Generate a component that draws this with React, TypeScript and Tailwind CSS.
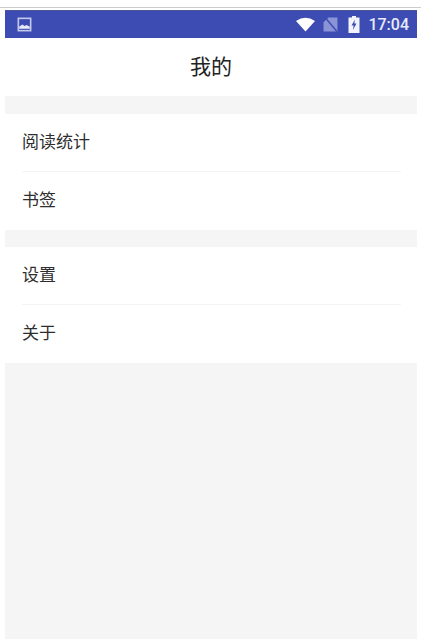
const font = { fontFamily: '"Noto Sans CJK SC", sans-serif' };

function Row({ label, divider }: { label: string; divider?: boolean }) {
  return (
    <div className="h-[58px] pl-[17px] pr-[16px] flex flex-col">
      <div className="flex-1 flex items-center pb-[4px] text-[17px] text-[#2e2e2e]">{label}</div>
      {divider && <div className="h-px bg-[#f4f4f4]" />}
    </div>
  );
}

export default function App() {
  return (
    <div className="w-[421px] h-[639px] bg-white flex flex-col overflow-hidden" style={font}>
      <div className="h-[7px] shrink-0" />
      <div className="h-[1px] shrink-0 bg-[#cfcbc8]" />
      <div className="h-[2px] shrink-0" />
      <div className="flex-1 ml-[5px] mr-[4px] flex flex-col bg-[#f5f5f5]">
        <div className="h-[28px] shrink-0 bg-[#3c4cb2] border-t border-[#4a5596] flex items-center pl-[12px] pr-[8px] text-white">
          <svg width="15" height="15" viewBox="0 0 14 14" className="mr-auto">
            <rect x="0.5" y="0.5" width="13" height="13" fill="#c3c9ec" />
            <rect x="2" y="2" width="10" height="10" fill="#3c4cb2" />
            <path d="M2 11 L2 9 L5 7 L7 8.5 L9 7.5 L12 9 L12 11 Z" fill="#e8eaf8" />
          </svg>
          <svg width="21" height="15" viewBox="0 0 20 15">
            <path d="M0.5 4 Q10 -2.5 19.5 4 L10 14.5 Z" fill="#ffffff" />
          </svg>
          <svg width="15" height="15" viewBox="0 0 14 14" className="ml-[7px]">
            <path d="M0.5 13.5 H13.5 V0.5 H5 L0.5 5 Z" fill="#8a94d6" />
            <path d="M2 0.5 L13 13.5" stroke="#3c4cb2" strokeWidth="1.3" />
          </svg>
          <svg width="12" height="17" viewBox="0 0 11 17" className="ml-[10px]">
            <path d="M3.5 0 H7.5 V1.5 H11 V17 H0 V1.5 H3.5 Z" fill="#f2f3fb" />
            <path d="M6.5 3.5 L3 9.5 H5.2 L4.4 14 L8 7.6 H5.8 Z" fill="#3c4cb2" />
          </svg>
          <span className="ml-[8px] text-[16px] font-medium leading-none text-[#e8eaf8]" style={{ fontFamily: 'Roboto, sans-serif' }}>17:04</span>
        </div>
        <div className="h-[58px] shrink-0 bg-white flex items-center justify-center pb-[2px] text-[21px] text-[#222222]">我的</div>
        <div className="h-[18px] shrink-0" />
        <div className="bg-white shrink-0">
          <Row label="阅读统计" divider />
          <Row label="书签" />
        </div>
        <div className="h-[17px] shrink-0" />
        <div className="bg-white shrink-0">
          <Row label="设置" divider />
          <Row label="关于" />
        </div>
      </div>
    </div>
  );
}
